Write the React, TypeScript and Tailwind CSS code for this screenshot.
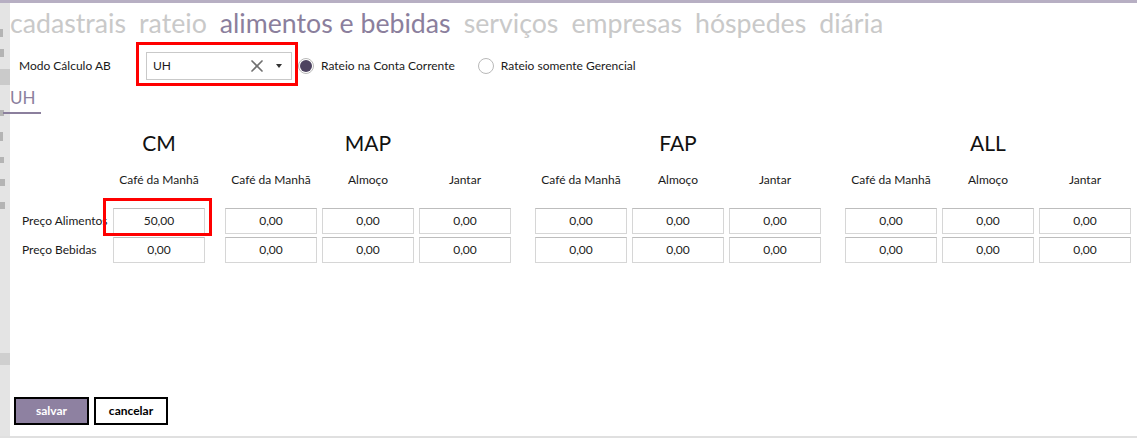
import { X } from 'lucide-react'

const groups = [
  { name: 'CM', cols: ['Café da Manhã'] },
  { name: 'MAP', cols: ['Café da Manhã', 'Almoço', 'Jantar'] },
  { name: 'FAP', cols: ['Café da Manhã', 'Almoço', 'Jantar'] },
  { name: 'ALL', cols: ['Café da Manhã', 'Almoço', 'Jantar'] },
]

const tabs = ['cadastrais', 'rateio', 'alimentos e bebidas', 'serviços', 'empresas', 'hóspedes', 'diária']

function Radio({ checked, label }: { checked?: boolean; label: string }) {
  return (
    <label className="flex items-center gap-[7px]">
      <span className="flex h-[16px] w-[16px] items-center justify-center rounded-full border border-[#b9b9b9] bg-white">
        {checked && <span className="h-[12px] w-[12px] rounded-full bg-[#4d4360]" />}
      </span>
      <span className="text-[12px] text-[#1a1a1a]">{label}</span>
    </label>
  )
}

function Cell({ value }: { value: string }) {
  return (
    <div className="flex h-[26px] w-[92px] items-center justify-center border border-[#d6d6d6] border-t-[#bdbdbd] text-[12px] text-[#222]">
      {value}
    </div>
  )
}

function Group({ name, cols, first }: { name: string; cols: string[]; first?: boolean }) {
  return (
    <div className="flex flex-col">
      <div className="flex h-[30px] items-center justify-center text-[21px] text-[#111]">{name}</div>
      <div className="mt-[12px] flex h-[20px] items-center gap-[5px]">
        {cols.map((c, i) => (
          <div key={i} className="w-[92px] text-center text-[12px] text-[#1a1a1a]">
            {c}
          </div>
        ))}
      </div>
      <div className="mt-[18px] flex flex-col gap-[3px]">
        {[0, 1].map((r) => (
          <div key={r} className="flex gap-[5px]">
            {cols.map((_, i) => (
              <div key={i} className="relative">
                <Cell value={first && r === 0 ? '50,00' : '0,00'} />
                {first && r === 0 && (
                  <div className="pointer-events-none absolute left-[-10px] top-[-10px] h-[38px] w-[109px] border-[3px] border-[#ff0000]" />
                )}
              </div>
            ))}
          </div>
        ))}
      </div>
    </div>
  )
}

export default function App() {
  return (
    <div className="flex h-[438px] w-[1137px] flex-col overflow-hidden bg-white font-['Lato',sans-serif]">
      <div className="h-[3px] bg-[#b7afc3]" />
      <div className="flex flex-1">
        {/* background page peeking out on the left */}
        <div className="flex w-[10px] flex-col bg-[#e4e4e4]">
          <span className="mt-[26px] h-[8px] w-[3px] bg-[#b4b4b4]" />
          <span className="mt-[12px] h-[8px] w-[4px] bg-[#b4b4b4]" />
          <span className="mt-[12px] h-[16px] bg-[#cacaca]" />
          <span className="mt-[25px] h-[6px] w-[4px] bg-[#b4b4b4]" />
          <span className="mt-[16px] h-[9px] w-[3px] bg-[#b4b4b4]" />
          <span className="mt-[16px] h-[6px] w-[4px] bg-[#b4b4b4]" />
          <span className="mt-[16px] h-[7px] w-[5px] bg-[#b4b4b4]" />
          <span className="mt-[16px] h-[7px] w-[5px] bg-[#b4b4b4]" />
          <span className="mt-[144px] h-[12px] bg-[#cfcfcf]" />
        </div>

        <div className="flex flex-1 flex-col">
          <div className="flex h-[40px] items-center gap-[13px] text-[26.7px] leading-none">
            {tabs.map((t) => (
              <span key={t} className={t === 'alimentos e bebidas' ? 'text-[#8b7f9d]' : 'text-[#c9c9c9]'}>
                {t}
              </span>
            ))}
          </div>

          <div className="flex h-[46px] items-center">
            <span className="ml-[9px] w-[116px] text-[12px] text-[#1a1a1a]">Modo Cálculo AB</span>
            <div className="relative ml-[11px] flex h-[28px] w-[146px] items-center border border-[#c9c9c9] pl-[6px] text-[12px] text-[#1a1a1a]">
              <span className="flex-1">UH</span>
              <X className="h-[20px] w-[20px] text-[#707070]" strokeWidth={2} />
              <span className="ml-[9px] mr-[9px] h-0 w-0 border-x-[3.5px] border-t-[4px] border-x-transparent border-t-[#333]" />
              <div className="pointer-events-none absolute left-[-11px] top-[-11px] h-[44px] w-[162px] border-[3px] border-[#ff0000]" />
            </div>
            <div className="ml-[6px]">
              <Radio checked label="Rateio na Conta Corrente" />
            </div>
            <div className="ml-[23px]">
              <Radio label="Rateio somente Gerencial" />
            </div>
          </div>

          <div className="flex">
            <div className="relative -ml-[7px] border-b-2 border-[#8b7f9d] pb-[6px] pl-[7px] pr-[6px] text-[17px] leading-[17px] text-[#8b7f9d]">
              UH
            </div>
          </div>

          <div className="mt-[14px] flex">
            <div className="flex w-[103px] flex-col pl-[12px] pt-[80px] text-[12px] text-[#1a1a1a]">
              <div className="flex h-[26px] items-center whitespace-nowrap">Preço Alimentos</div>
              <div className="mt-[3px] flex h-[26px] items-center whitespace-nowrap">Preço Bebidas</div>
            </div>
            <Group {...groups[0]} first />
            <div className="ml-[20px]">
              <Group {...groups[1]} />
            </div>
            <div className="ml-[24px]">
              <Group {...groups[2]} />
            </div>
            <div className="ml-[24px]">
              <Group {...groups[3]} />
            </div>
          </div>

          <div className="mt-auto mb-[11px] ml-[4px] flex gap-[5px]">
            <button className="h-[28px] w-[75px] border-2 border-black bg-[#8e81a1] text-[12px] font-bold text-white">
              salvar
            </button>
            <button className="h-[28px] w-[74px] border-2 border-black bg-white text-[12px] font-bold text-black">
              cancelar
            </button>
          </div>
        </div>
      </div>
      <div className="h-[2px] bg-[#e0e0e0]" />
    </div>
  )
}
